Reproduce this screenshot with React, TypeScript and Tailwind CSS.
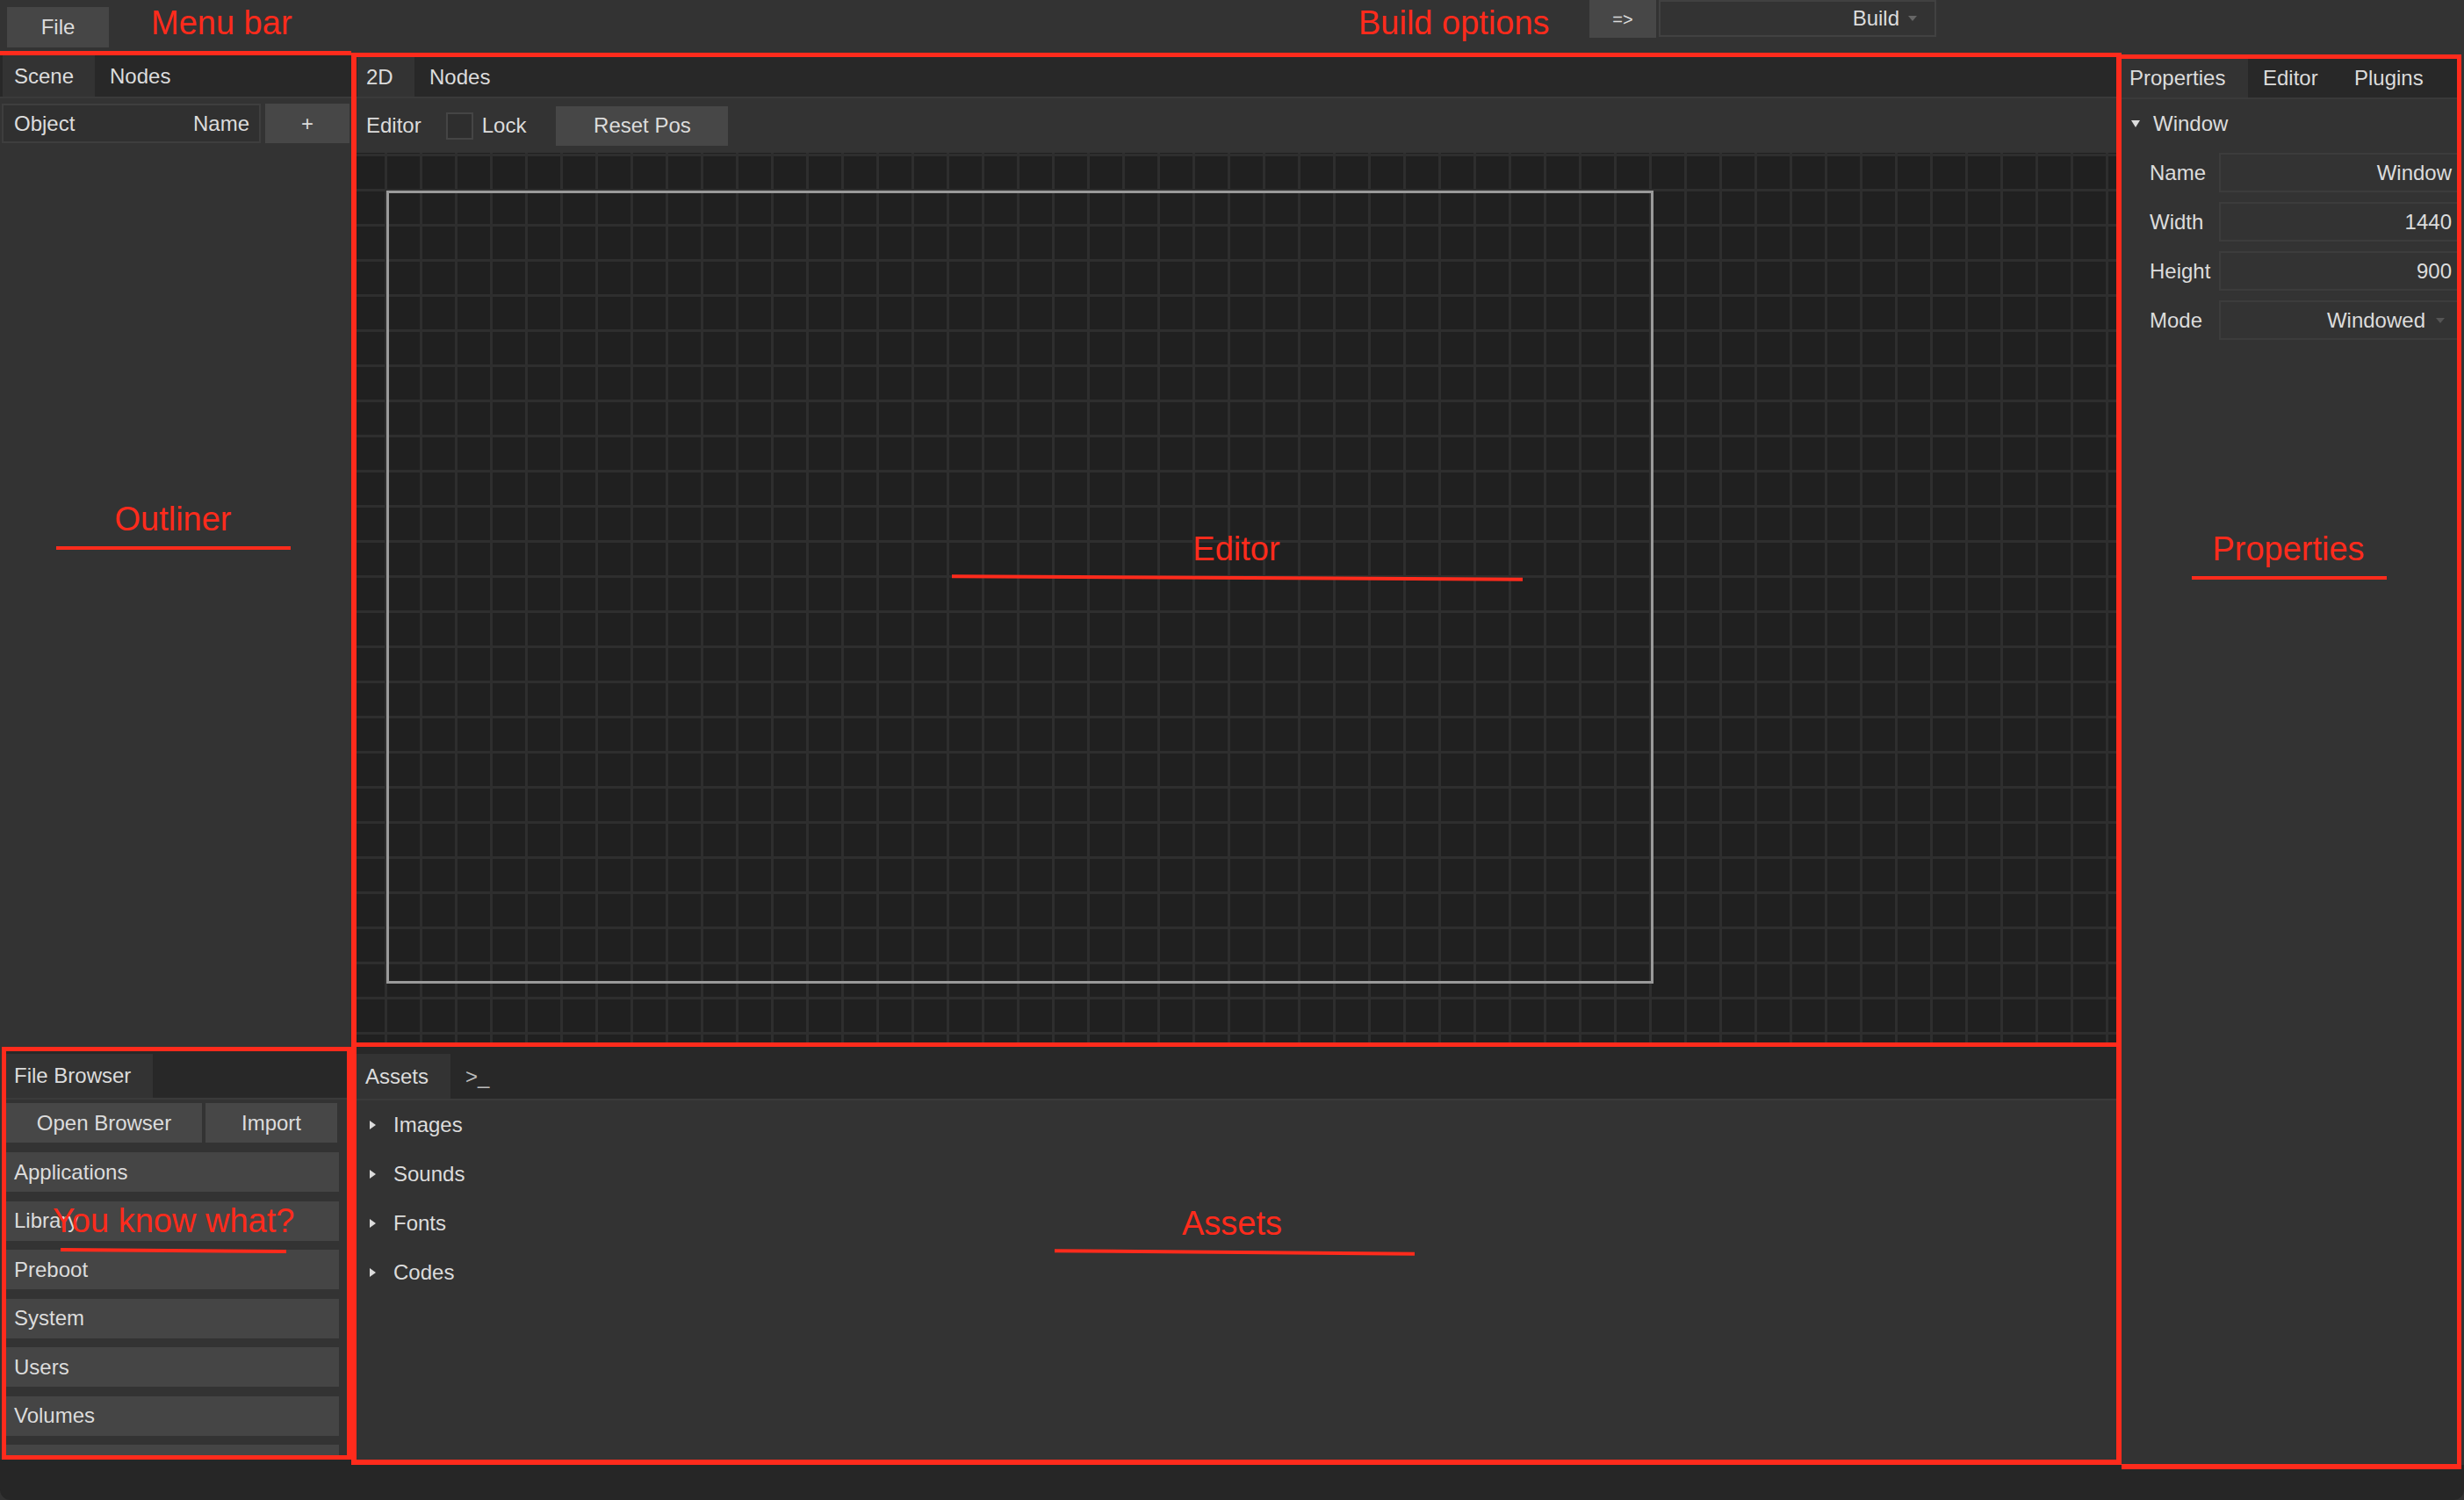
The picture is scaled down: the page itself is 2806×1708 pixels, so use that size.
import type { ReactNode } from 'react'

const RED = 'border-[#ff2b1c]'
const note = "absolute whitespace-nowrap text-[38px] leading-[38px] text-[#ff2b1c] font-['Liberation_Sans',Arial,sans-serif]"
const line = 'absolute h-[4px] bg-[#ff2b1c]'

const TabBar = ({ children, className = '' }: { children: ReactNode; className?: string }) => (
  <div className={`flex shrink-0 bg-[#282828] border-b-2 border-[#3a3a3a] ${className}`}>{children}</div>
)

const Tab = ({ label, active = false, className = '' }: { label: string; active?: boolean; className?: string }) => (
  <div className={`flex items-center ${active ? 'bg-[#333]' : ''} ${className}`}>{label}</div>
)

const Caret = ({ dir }: { dir: 'down' | 'right' }) =>
  dir === 'down' ? (
    <svg width="10" height="8" viewBox="0 0 10 8" className="shrink-0">
      <polygon points="0,0 10,0 5,8" fill="#dcdcdc" />
    </svg>
  ) : (
    <svg width="7" height="10" viewBox="0 0 7 10" className="shrink-0">
      <polygon points="0,0 7,5 0,10" fill="#dcdcdc" />
    </svg>
  )

const places = ['Applications', 'Library', 'Preboot', 'System', 'Users', 'Volumes', '']
const assets = ['Images', 'Sounds', 'Fonts', 'Codes']
const props = [
  { label: 'Name', value: 'Window' },
  { label: 'Width', value: '1440' },
  { label: 'Height', value: '900' },
  { label: 'Mode', value: 'Windowed', select: true },
]

export default function App() {
  return (
    <div className="relative w-[2806px] h-[1708px] overflow-hidden bg-[#333] font-['Liberation_Sans',Arial,sans-serif] text-[24px] leading-none text-[#dcdcdc]">
      {/* menu bar */}
      <header className="flex h-[58px] items-start">
        <div className="ml-[8px] mt-[8px] flex h-[46px] w-[116px] items-center justify-center bg-[#464646]">File</div>
        <div className="ml-[1686px] flex h-[43px] w-[76px] items-center justify-center bg-[#474747] text-[20px]">
          =&gt;
        </div>
        <div className="ml-[3px] flex h-[42px] w-[316px] items-center justify-end gap-[10px] border-2 border-[#414141] pr-[20px]">
          <span>Build</span>
          <svg width="10" height="6" viewBox="0 0 10 6">
            <polygon points="0,0 10,0 5,6" fill="#666" />
          </svg>
        </div>
      </header>

      <div className="flex h-[1610px]">
        {/* left column */}
        <div className="flex w-[400px] shrink-0 flex-col">
          <section className={`flex h-[1134px] flex-col border-t-[5px] ${RED}`}>
            <TabBar className="h-[49px] pl-[3px]">
              <Tab label="Scene" active className="w-[105px] pl-[13px]" />
              <Tab label="Nodes" className="pl-[17px]" />
            </TabBar>
            <div className="mt-[6px] flex h-[45px] gap-[5px] pl-[2px]">
              <div className="flex w-[295px] items-center justify-between border-2 border-[#3e3e3e] bg-[#303030] pl-[12px] pr-[11px]">
                <span>Object</span>
                <span>Name</span>
              </div>
              <div className="flex w-[96px] items-center justify-center bg-[#474747]">+</div>
            </div>
          </section>
          <section className={`ml-[2px] flex h-[470px] flex-col overflow-hidden border-[5px] ${RED}`}>
            <TabBar className="h-[55px] items-end">
              <Tab label="File Browser" active className="h-[50px] w-[167px] pl-[9px]" />
            </TabBar>
            <div className="mt-[4px] flex h-[45px] shrink-0 gap-[4px]">
              <div className="flex w-[223px] items-center justify-center bg-[#474747]">Open Browser</div>
              <div className="flex w-[150px] items-center justify-center bg-[#474747]">Import</div>
            </div>
            <div className="mt-[11px] flex w-[379px] flex-col gap-[10.5px]">
              {places.map((p, i) => (
                <div key={i} className="flex h-[45px] shrink-0 items-center bg-[#454545] pl-[9px]">
                  {p}
                </div>
              ))}
            </div>
          </section>
          <div className="flex-1 bg-[#262626]" />
        </div>

        {/* center column */}
        <div className="flex w-[2016px] shrink-0 flex-col">
          <section className={`mt-[2px] flex h-[1132px] flex-col border-x-[6px] border-y-[5px] ${RED}`}>
            <TabBar className="h-[47px] pl-[1px]">
              <Tab label="2D" active className="w-[65px] pl-[10px]" />
              <Tab label="Nodes" className="pl-[17px]" />
            </TabBar>
            <div className="flex h-[62px] shrink-0 items-center bg-[#333] pl-[11px]">
              <span>Editor</span>
              <div className="ml-[28px] h-[31px] w-[31px] border-2 border-[#454545] bg-[#2e2e2e]" />
              <span className="ml-[10px]">Lock</span>
              <div className="ml-[34px] flex h-[45px] w-[196px] items-center justify-center bg-[#474747]">Reset Pos</div>
            </div>
            <div className="relative flex-1 bg-[#202020] [background-image:linear-gradient(to_right,#2e2e2e_0,#2e2e2e_3px,transparent_3px),linear-gradient(to_bottom,#2e2e2e_0,#2e2e2e_3px,transparent_3px)] [background-size:40px_40px] [background-position:32px_1px]">
              <div className="absolute left-[34px] top-[43px] h-[903px] w-[1443px] border-[3px] border-[#9a9a9a]" />
            </div>
          </section>
          <section className={`relative z-10 flex h-[476px] flex-col border-x-[6px] border-b-[6px] ${RED}`}>
            <TabBar className="h-[61px] items-end">
              <Tab label="Assets" active className="h-[51px] w-[107px] pl-[10px]" />
              <Tab label=">_" className="h-[51px] pl-[17px] text-[#bbb]" />
            </TabBar>
            <div className="flex flex-col">
              {assets.map((a) => (
                <div key={a} className="flex h-[56px] items-center pl-[15px]">
                  <Caret dir="right" />
                  <span className="ml-[20px]">{a}</span>
                </div>
              ))}
            </div>
          </section>
        </div>

        {/* right column */}
        <div className="w-[390px] shrink-0">
          <section className={`relative z-10 mr-[3px] mt-[4px] flex h-[1611px] flex-col overflow-hidden border-t-[5px] border-r-[5px] border-b-[6px] ${RED}`}>
            <TabBar className="h-[46px]">
              <Tab label="Properties" active className="w-[144px] pl-[9px]" />
              <Tab label="Editor" className="w-[104px] pl-[17px]" />
              <Tab label="Plugins" className="pl-[17px]" />
            </TabBar>
            <div className="flex h-[56px] items-center pl-[11px]">
              <Caret dir="down" />
              <span className="ml-[15px]">Window</span>
            </div>
            <div className="mt-[5px] flex flex-col gap-[11px]">
              {props.map((p) => (
                <div key={p.label} className="flex h-[45px] items-center pl-[32px]">
                  <span className="w-[79px] shrink-0">{p.label}</span>
                  <div className="-mr-[4px] flex h-full flex-1 items-center justify-end gap-[12px] border-2 border-[#3c3c3c] pr-[8px]">
                    <span>{p.value}</span>
                    {p.select && (
                      <svg width="10" height="6" viewBox="0 0 10 6" className="mr-[8px]">
                        <polygon points="0,0 10,0 5,6" fill="#555" />
                      </svg>
                    )}
                  </div>
                </div>
              ))}
            </div>
          </section>
        </div>
      </div>

      <footer className="h-[40px] rounded-b-[12px] bg-[#262626]" />

      {/* annotations */}
      <span className={`${note} left-[172px] top-[7px]`}>Menu bar</span>
      <span className={`${note} left-[1547px] top-[7px]`}>Build options</span>
      <span className={`${note} left-[197px] top-[572px] -translate-x-1/2`}>Outliner</span>
      <div className={`${line} left-[64px] top-[622px] w-[267px]`} />
      <span className={`${note} left-[1408px] top-[606px] -translate-x-1/2`}>Editor</span>
      <div className={`${line} left-[1084px] top-[656px] w-[650px] rotate-[0.3deg]`} />
      <span className={`${note} left-[2606px] top-[606px] -translate-x-1/2`}>Properties</span>
      <div className={`${line} left-[2496px] top-[656px] w-[222px]`} />
      <span className={`${note} left-[1403px] top-[1374px] -translate-x-1/2`}>Assets</span>
      <div className={`${line} left-[1201px] top-[1424px] w-[410px] rotate-[0.5deg]`} />
      <span className={`${note} left-[60px] top-[1371px]`}>You know what?</span>
      <div className={`${line} left-[69px] top-[1422px] w-[257px] rotate-[0.5deg]`} />
    </div>
  )
}
